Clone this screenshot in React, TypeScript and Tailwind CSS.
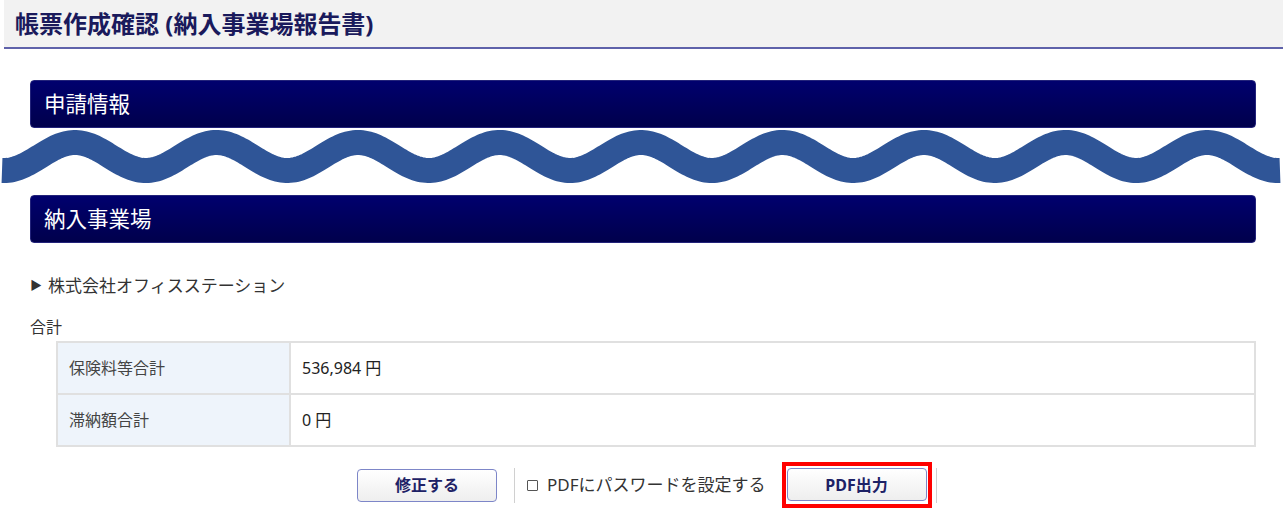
import React from 'react';

const FONT = '"Noto Sans", "Noto Sans CJK JP", sans-serif';

// 画面の途中を省略していることを示す波線（スクリーンショット上の描画）
function wavePath(): string {
  const pts: string[] = [];
  for (let x = 2; x <= 1280; x += 2) {
    const y = 28.5 - 14 * Math.cos((2 * Math.PI * (x - 75)) / 141.5);
    pts.push(`${pts.length === 0 ? 'M' : 'L'}${x} ${y.toFixed(2)}`);
  }
  return pts.join(' ');
}

const WAVE_D = wavePath();

function SectionBar({ title }: { title: string }) {
  return (
    <div className="h-[48px] rounded-[4px] border border-[#23237a] bg-linear-to-b from-[#00006e] to-[#00004c] flex items-center pl-[13px]">
      <span className="text-[21.5px] text-white leading-none">{title}</span>
    </div>
  );
}

function NavButton({ label }: { label: string }) {
  return (
    <button
      type="button"
      className="w-[140px] h-[33px] rounded-[4px] border-[1.5px] border-[#7d86c8] bg-linear-to-b from-white to-[#eeeeee] text-[16px] font-bold text-[#1e2266] flex items-center justify-center"
    >
      {label}
    </button>
  );
}

export default function App() {
  return (
    <div className="w-[1283px] h-[520px] bg-white overflow-hidden" style={{ fontFamily: FONT }}>
      {/* ページタイトル */}
      <div className="ml-[4px] h-[49px] bg-[#f2f2f2] border-b-[2px] border-[#5f62aa] flex items-center pl-[11px]">
        <h1 className="text-[24px] font-bold text-[#1a1a5c] leading-none">帳票作成確認 (納入事業場報告書)</h1>
      </div>

      <div className="pl-[30px] pr-[27px] pt-[31px]">
        <SectionBar title="申請情報" />

        <div className="-ml-[30px] -mr-[27px] h-[67px]">
          <svg width="1283" height="67" viewBox="0 0 1283 67" className="block">
            <path d={WAVE_D} fill="none" stroke="#2f5597" strokeWidth="25" strokeLinecap="butt" />
          </svg>
        </div>

        <SectionBar title="納入事業場" />

        <div className="mt-[31px] flex items-center gap-[6px] text-[17px] text-[#333] leading-[24px]">
          <span className="text-[12px] text-[#333]">▶</span>
          <span>株式会社オフィスステーション</span>
        </div>

        <div className="mt-[17px] text-[16px] text-[#333] leading-[24px]">合計</div>

        <table className="ml-[26px] mt-[2px] w-[1200px] border-collapse text-[16px]">
          <tbody>
            <tr className="h-[52px]">
              <td className="w-[233px] bg-[#eef4fb] border-2 border-[#e0e0e0] pl-[11px] text-[#444]">保険料等合計</td>
              <td className="border-2 border-[#e0e0e0] pl-[11px] text-[#222]">536,984 円</td>
            </tr>
            <tr className="h-[52px]">
              <td className="w-[233px] bg-[#eef4fb] border-2 border-[#e0e0e0] pl-[11px] text-[#444]">滞納額合計</td>
              <td className="border-2 border-[#e0e0e0] pl-[11px] text-[#222]">0 円</td>
            </tr>
          </tbody>
        </table>

        {/* 操作ボタン */}
        <div className="mt-[15px] flex items-center pl-[327px]">
          <NavButton label="修正する" />
          <div className="ml-[17px] w-px h-[35px] bg-[#d0d0d0]" />
          <label className="ml-[12px] flex items-center gap-[9px] text-[17px] text-[#333]">
            <span className="w-[11px] h-[11px] border border-[#555] rounded-[1px] bg-white" />
            <span>PDFにパスワードを設定する</span>
          </label>
          <div className="ml-[16px] border-[4px] border-[#ff0000] px-[1px] pt-[2px] pb-[3px]">
            <NavButton label="PDF出力" />
          </div>
          <div className="ml-[4px] w-px h-[35px] bg-[#d0d0d0]" />
        </div>
      </div>
    </div>
  );
}
